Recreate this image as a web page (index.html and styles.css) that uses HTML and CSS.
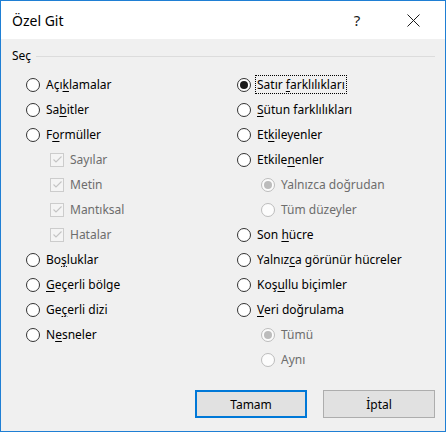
FILE: index.html
```html
<!DOCTYPE html>
<html lang="tr">
<head>
<meta charset="utf-8">
<title>Özel Git</title>
<link rel="stylesheet" href="styles.css">
</head>
<body>
<div class="window">
  <div class="titlebar">
    <span class="title">Özel Git</span>
    <span class="help">?</span>
    <span class="close">
      <svg width="13" height="13" viewBox="0 0 13 13"><path d="M0.5 0.5 L12.5 12.5 M12.5 0.5 L0.5 12.5" stroke="#1a1a1a" stroke-width="1" fill="none"/></svg>
    </span>
  </div>
  <div class="content">
    <div class="group-head"><span class="group-label">Seç</span><span class="group-line"></span></div>
    <div class="columns">
      <div class="col">
        <div class="row"><span class="radio"></span><span class="lbl">Açı<u>k</u>lamalar</span></div>
        <div class="row"><span class="radio"></span><span class="lbl">Sa<u>b</u>itler</span></div>
        <div class="row"><span class="radio"></span><span class="lbl">F<u>o</u>rmüller</span></div>
        <div class="row sub disabled"><span class="check"><svg width="11" height="11" viewBox="0 0 11 11"><path d="M1.5 5.5 L4 8 L9.5 2.5" stroke="#c4c4c4" stroke-width="1.1" fill="none"/></svg></span><span class="lbl">Sayılar</span></div>
        <div class="row sub disabled"><span class="check"><svg width="11" height="11" viewBox="0 0 11 11"><path d="M1.5 5.5 L4 8 L9.5 2.5" stroke="#c4c4c4" stroke-width="1.1" fill="none"/></svg></span><span class="lbl">Metin</span></div>
        <div class="row sub disabled"><span class="check"><svg width="11" height="11" viewBox="0 0 11 11"><path d="M1.5 5.5 L4 8 L9.5 2.5" stroke="#c4c4c4" stroke-width="1.1" fill="none"/></svg></span><span class="lbl">Mantıksal</span></div>
        <div class="row sub disabled"><span class="check"><svg width="11" height="11" viewBox="0 0 11 11"><path d="M1.5 5.5 L4 8 L9.5 2.5" stroke="#c4c4c4" stroke-width="1.1" fill="none"/></svg></span><span class="lbl">Hatalar</span></div>
        <div class="row"><span class="radio"></span><span class="lbl">Bo<u>ş</u>luklar</span></div>
        <div class="row"><span class="radio"></span><span class="lbl"><u>G</u>eçerli bölge</span></div>
        <div class="row"><span class="radio"></span><span class="lbl">Ge<u>ç</u>erli dizi</span></div>
        <div class="row"><span class="radio"></span><span class="lbl">N<u>e</u>sneler</span></div>
      </div>
      <div class="col">
        <div class="row"><span class="radio on"></span><span class="lbl focus">Satır <u>f</u>arklılıkları</span></div>
        <div class="row"><span class="radio"></span><span class="lbl"><u>S</u>ütun farklılıkları</span></div>
        <div class="row"><span class="radio"></span><span class="lbl">Et<u>k</u>ileyenler</span></div>
        <div class="row"><span class="radio"></span><span class="lbl">Etkile<u>n</u>enler</span></div>
        <div class="row sub disabled"><span class="radio on"></span><span class="lbl">Yalnızca doğrudan</span></div>
        <div class="row sub disabled"><span class="radio"></span><span class="lbl">Tüm düzeyler</span></div>
        <div class="row"><span class="radio"></span><span class="lbl">Son <u>h</u>ücre</span></div>
        <div class="row"><span class="radio"></span><span class="lbl">Yalnız<u>c</u>a görünür hücreler</span></div>
        <div class="row"><span class="radio"></span><span class="lbl">Koş<u>u</u>llu biçimler</span></div>
        <div class="row"><span class="radio"></span><span class="lbl"><u>V</u>eri doğrulama</span></div>
        <div class="row sub disabled"><span class="radio on"></span><span class="lbl">Tümü</span></div>
        <div class="row sub disabled"><span class="radio"></span><span class="lbl">Aynı</span></div>
      </div>
    </div>
    <div class="buttons">
      <button class="btn default">Tamam</button>
      <button class="btn">İptal</button>
    </div>
  </div>
</div>
</body>
</html>
```
FILE: styles.css
```css
html, body {
  margin: 0;
  padding: 0;
  background: #f0f0f0;
}
.window {
  box-sizing: border-box;
  width: 446px;
  height: 432px;
  border: 1px solid #1f7fd4;
  background: #f0f0f0;
  font-family: "Noto Sans", "Liberation Sans", sans-serif;
  font-size: 12px;
  color: #000;
  display: flex;
  flex-direction: column;
}
.titlebar {
  height: 38px;
  background: #fff;
  display: flex;
  align-items: center;
  flex-shrink: 0;
}
.title {
  margin-left: 11px;
  font-size: 14px;
  flex: 1;
}
.help {
  font-size: 15px;
  width: 14px;
  text-align: center;
  margin-right: 43px;
  color: #1a1a1a;
}
.close {
  display: flex;
  margin-right: 25px;
}
.content {
  flex: 1;
  padding: 9px 10px 0 11px;
  display: flex;
  flex-direction: column;
}
.group-head {
  height: 16px;
  display: flex;
  align-items: center;
}
.group-label {
  padding-right: 5px;
  line-height: 16px;
}
.group-line {
  flex: 1;
  height: 1px;
  background: #dcdcdc;
}
.columns {
  display: grid;
  grid-template-columns: 211px 1fr;
  margin: 8px 0 0 14px;
}
.col {
  display: flex;
  flex-direction: column;
}
.row {
  height: 25px;
  display: flex;
  align-items: center;
  gap: 6px;
}
.row.sub {
  padding-left: 24px;
}
.lbl {
  line-height: 17px;
  white-space: nowrap;
}
.lbl u {
  text-decoration-thickness: 1px;
  text-underline-offset: 2px;
}
.radio {
  box-sizing: border-box;
  width: 14px;
  height: 14px;
  border: 1px solid #333;
  border-radius: 50%;
  background: #fff;
  display: flex;
  align-items: center;
  justify-content: center;
  flex-shrink: 0;
}
.radio.on::after {
  content: "";
  width: 8px;
  height: 8px;
  border-radius: 50%;
  background: #1a1a1a;
}
.check {
  box-sizing: border-box;
  width: 14px;
  height: 14px;
  border: 1px solid #cccccc;
  background: #f4f4f4;
  display: flex;
  align-items: center;
  justify-content: center;
  flex-shrink: 0;
}
.disabled .lbl {
  color: #6d6d6d;
}
.disabled .radio {
  border-color: #bcbcbc;
  background: #fcfcfc;
}
.disabled .radio.on::after {
  background: #bcbcbc;
}
.focus {
  outline: 1px dotted #000;
  padding: 0 1px;
  margin-left: -1px;
}
.buttons {
  margin-top: 18px;
  display: flex;
  justify-content: flex-end;
  gap: 16px;
}
.btn {
  box-sizing: border-box;
  width: 112px;
  height: 28px;
  background: #e1e1e1;
  border: 1px solid #adadad;
  font-family: "Noto Sans", "Liberation Sans", sans-serif;
  font-size: 12px;
  color: #000;
  padding: 0;
}
.btn.default {
  border: 2px solid #0078d7;
}
```
